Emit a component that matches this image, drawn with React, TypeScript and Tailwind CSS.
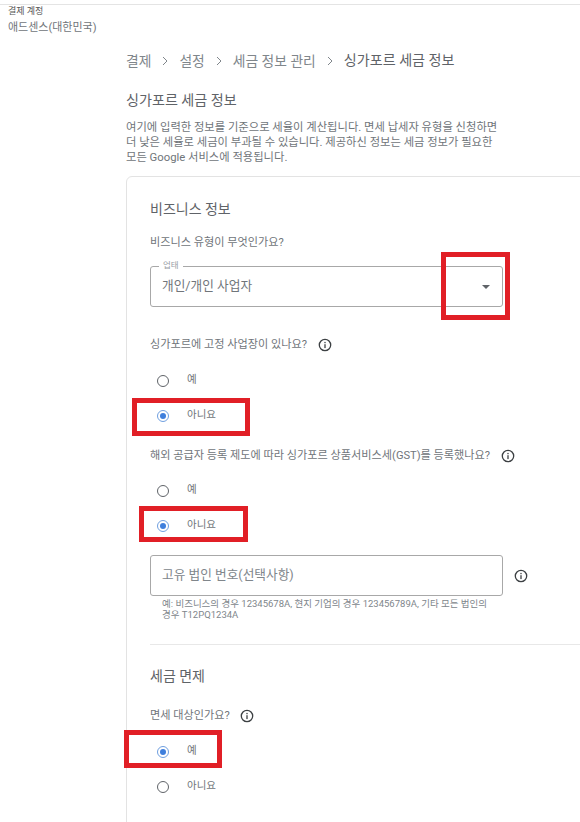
import type { ReactNode } from "react";

const font = "font-['Roboto','Noto_Sans_CJK_KR',sans-serif]";

function InfoIcon({ className = "" }: { className?: string }) {
  return (
    <svg viewBox="0 0 14 14" className={`h-[14px] w-[14px] shrink-0 ${className}`} fill="none">
      <circle cx="7" cy="7" r="5.7" stroke="#3c4043" strokeWidth="1.3" />
      <rect x="6.35" y="6.2" width="1.3" height="3.9" fill="#3c4043" />
      <rect x="6.35" y="3.9" width="1.3" height="1.3" fill="#3c4043" />
    </svg>
  );
}

function Chevron() {
  return (
    <svg viewBox="0 0 6 10" className="mx-[11px] h-[10px] w-[6px]" fill="none">
      <path d="M1 1l4 4-4 4" stroke="#80868b" strokeWidth="1" />
    </svg>
  );
}

function Radio({ label, checked = false }: { label: string; checked?: boolean }) {
  return (
    <div className="flex h-[35px] items-center pl-[7px]">
      <span
        className={`flex h-[12px] w-[12px] items-center justify-center rounded-full border ${
          checked ? "border-[#6f9fe0] bg-white" : "border-[#5f6368]"
        }`}
      >
        {checked && <span className="h-[6px] w-[6px] rounded-full bg-[#3f7fdc]" />}
      </span>
      <span className="ml-[18px] -translate-y-[1px] text-[10.5px] text-[#70757a]">{label}</span>
    </div>
  );
}

function Question({ children }: { children: ReactNode }) {
  return <div className="flex items-center text-[11.15px] leading-[16px] text-[#70757a]">{children}</div>;
}

function RedBox({ className }: { className: string }) {
  return <div className={`absolute border-[5px] border-[#e11f26] ${className}`} />;
}

export default function App() {
  return (
    <div className={`relative h-[822px] w-[580px] overflow-hidden bg-white ${font}`}>
      <div className="h-[5px] border-b border-[#e4e4e4]" />
      <div className="pl-[8px]">
        <div className="mt-[1px] text-[9px] leading-[10px] text-[#555]">결제 계정</div>
        <div className="mt-[4px] text-[11px] leading-[16px] text-[#70757a]">애드센스(대한민국)</div>
      </div>

      <main className="pl-[126px] pt-[15px]">
        <nav className="flex h-[20px] items-center text-[13.8px] text-[#80868b]">
          <span>결제</span>
          <Chevron />
          <span>설정</span>
          <Chevron />
          <span>세금 정보 관리</span>
          <Chevron />
          <span className="text-[14.1px] text-[#5f6368]">싱가포르 세금 정보</span>
        </nav>

        <h1 className="mt-[19px] text-[14.1px] font-normal leading-[20px] text-[#5f6368]">싱가포르 세금 정보</h1>
        <p className="mt-[10px] w-[400px] text-[11.3px] leading-[15px] text-[#70757a]">
          여기에 입력한 정보를 기준으로 세율이 계산됩니다. 면세 납세자 유형을 신청하면
          <br />
          더 낮은 세율로 세금이 부과될 수 있습니다. 제공하신 정보는 세금 정보가 필요한
          <br />
          모든 Google 서비스에 적용됩니다.
        </p>

        <section className="mt-[11px] h-[700px] w-[500px] rounded-[6px] border border-[#e3e3e3] px-[23px] pt-[22px]">
          <h2 className="text-[14px] font-normal leading-[20px] text-[#5f6368]">비즈니스 정보</h2>
          <div className="mt-[16px]">
            <Question>비즈니스 유형이 무엇인가요?</Question>
          </div>

          <div className="relative mt-[15px] flex h-[41px] w-[353px] items-center justify-between rounded-[3px] border border-[#a8a8a8] pl-[11px] pr-[12px]">
            <span className="absolute -top-[7px] left-[8px] bg-white px-[4px] text-[8.5px] leading-[11px] text-[#9aa0a6]">
              업태
            </span>
            <span className="-translate-y-[1px] text-[12.7px] text-[#70757a]">개인/개인 사업자</span>
            <span className="h-0 w-0 border-x-[4px] border-t-[4px] border-x-transparent border-t-[#5f6368]" />
          </div>

          <div className="mt-[30px]">
            <Question>
              싱가포르에 고정 사업장이 있나요?
              <InfoIcon className="ml-[11px]" />
            </Question>
          </div>
          <div className="mt-[10px]">
            <Radio label="예" />
            <Radio label="아니요" checked />
          </div>

          <div className="mt-[15px]">
            <Question>
              해외 공급자 등록 제도에 따라 싱가포르 상품서비스세(GST)를 등록했나요?
              <InfoIcon className="ml-[11px]" />
            </Question>
          </div>
          <div className="mt-[9px]">
            <Radio label="예" />
            <Radio label="아니요" checked />
          </div>

          <div className="mt-[12px] flex items-center">
            <div className="flex h-[41px] w-[353px] items-center rounded-[3px] border border-[#a8a8a8] pl-[11px]">
              <span className="-translate-y-[1px] text-[12.7px] text-[#80868b]">고유 법인 번호(선택사항)</span>
            </div>
            <InfoIcon className="ml-[11px]" />
          </div>
          <p className="mt-[2px] w-[345px] pl-[12px] text-[9.5px] leading-[11px] text-[#80868b]">
            예: 비즈니스의 경우 12345678A, 현지 기업의 경우 123456789A, 기타 모든 법인의
            <br />
            경우 T12PQ1234A
          </p>

          <div className="mt-[24px] border-t border-[#e8e8e8]" />

          <h2 className="mt-[21px] text-[14px] font-normal leading-[20px] text-[#5f6368]">세금 면제</h2>
          <div className="mt-[22px]">
            <Question>
              면세 대상인가요?
              <InfoIcon className="ml-[10px]" />
            </Question>
          </div>
          <div className="mt-[10px]">
            <Radio label="예" checked />
            <Radio label="아니요" />
          </div>
        </section>
      </main>

      <RedBox className="left-[441px] top-[252px] h-[68px] w-[69px]" />
      <RedBox className="left-[132px] top-[398px] h-[38px] w-[118px]" />
      <RedBox className="left-[139px] top-[506px] h-[36px] w-[109px]" />
      <RedBox className="left-[124px] top-[730px] h-[38px] w-[98px]" />
    </div>
  );
}
